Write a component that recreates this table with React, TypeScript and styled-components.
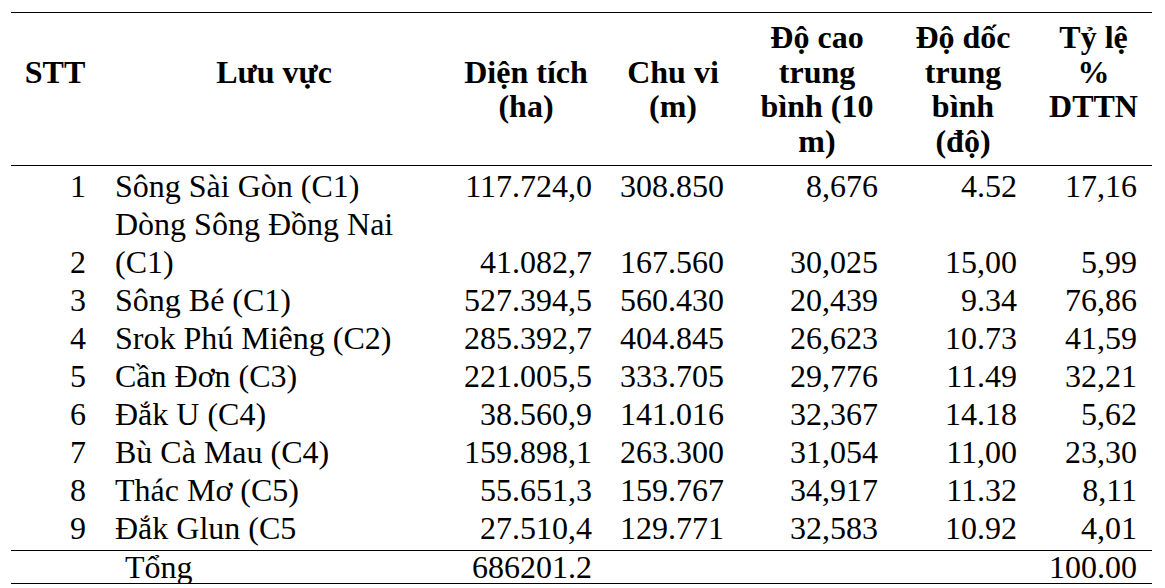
import React from "react";
import styled, { createGlobalStyle } from "styled-components";

const GlobalStyle = createGlobalStyle`
  html, body {
    margin: 0;
    padding: 0;
    background: #ffffff;
  }
  body {
    font-family: "Liberation Serif", "Times New Roman", serif;
    color: #000000;
  }
`;

const COLS = "88px 350px 154px 140px 148px 144px 117px";

const Table = styled.div`
  margin: 12px 0 0 11px;
  width: 1141px;
  font-family: "Liberation Serif", "Times New Roman", serif;
  font-size: 32px;
  color: #000;
`;

const HeaderRow = styled.div`
  display: grid;
  grid-template-columns: ${COLS};
  border-top: 1px solid #000;
  border-bottom: 1px solid #000;
  padding: 7px 0 6px;
  height: 138.8px;
  box-sizing: content-box;
`;

const HeadCell = styled.div<{ $line: number }>`
  font-weight: bold;
  text-align: center;
  line-height: 34.7px;
  white-space: nowrap;
  padding-top: ${(p) => p.$line * 34.7}px;
`;

const Body = styled.div`
  padding: 1px 0 3px;
`;

const Row = styled.div`
  display: grid;
  grid-template-columns: ${COLS};
  align-items: end;
  line-height: 38px;
`;

const Cell = styled.div<{ $align?: "left" | "right"; $pl?: number; $pr?: number }>`
  text-align: ${(p) => p.$align || "right"};
  padding-left: ${(p) => p.$pl || 0}px;
  padding-right: ${(p) => p.$pr || 0}px;
  white-space: ${(p) => (p.$align === "left" ? "normal" : "nowrap")};
`;

const FooterRow = styled.div`
  display: grid;
  grid-template-columns: ${COLS};
  border-top: 1px solid #000;
  border-bottom: 1px solid #000;
  line-height: 32px;
  height: 32px;
`;

type DataRow = [string, string, string, string, string, string, string];

const rows: DataRow[] = [
  ["1", "Sông Sài Gòn (C1)", "117.724,0", "308.850", "8,676", "4.52", "17,16"],
  ["2", "Dòng Sông Đồng Nai (C1)", "41.082,7", "167.560", "30,025", "15,00", "5,99"],
  ["3", "Sông Bé (C1)", "527.394,5", "560.430", "20,439", "9.34", "76,86"],
  ["4", "Srok Phú Miêng (C2)", "285.392,7", "404.845", "26,623", "10.73", "41,59"],
  ["5", "Cần Đơn (C3)", "221.005,5", "333.705", "29,776", "11.49", "32,21"],
  ["6", "Đắk U (C4)", "38.560,9", "141.016", "32,367", "14.18", "5,62"],
  ["7", "Bù Cà Mau (C4)", "159.898,1", "263.300", "31,054", "11,00", "23,30"],
  ["8", "Thác Mơ (C5)", "55.651,3", "159.767", "34,917", "11.32", "8,11"],
  ["9", "Đắk Glun (C5", "27.510,4", "129.771", "32,583", "10.92", "4,01"],
];

export default function App() {
  return (
    <>
      <GlobalStyle />
      <Table>
        <HeaderRow>
          <HeadCell $line={1}>STT</HeadCell>
          <HeadCell $line={1}>Lưu vực</HeadCell>
          <HeadCell $line={1}>
            Diện tích
            <br />
            (ha)
          </HeadCell>
          <HeadCell $line={1}>
            Chu vi
            <br />
            (m)
          </HeadCell>
          <HeadCell $line={0}>
            Độ cao
            <br />
            trung
            <br />
            bình (10
            <br />
            m)
          </HeadCell>
          <HeadCell $line={0}>
            Độ dốc
            <br />
            trung
            <br />
            bình
            <br />
            (độ)
          </HeadCell>
          <HeadCell $line={0}>
            Tỷ lệ
            <br />
            %
            <br />
            DTTN
          </HeadCell>
        </HeaderRow>
        <Body>
          {rows.map((r) => (
            <Row key={r[0]}>
              <Cell $pr={13}>{r[0]}</Cell>
              <Cell $align="left" $pl={16} $pr={10}>
                {r[1]}
              </Cell>
              <Cell $pr={11}>{r[2]}</Cell>
              <Cell $align="left" $pl={17}>
                {r[3]}
              </Cell>
              <Cell $pr={13}>{r[4]}</Cell>
              <Cell $pr={18}>{r[5]}</Cell>
              <Cell $pr={15}>{r[6]}</Cell>
            </Row>
          ))}
        </Body>
        <FooterRow>
          <Cell $pr={13}></Cell>
          <Cell $align="left" $pl={26}>
            Tổng
          </Cell>
          <Cell $pr={11}>686201.2</Cell>
          <Cell></Cell>
          <Cell></Cell>
          <Cell></Cell>
          <Cell $pr={15}>100.00</Cell>
        </FooterRow>
      </Table>
    </>
  );
}
